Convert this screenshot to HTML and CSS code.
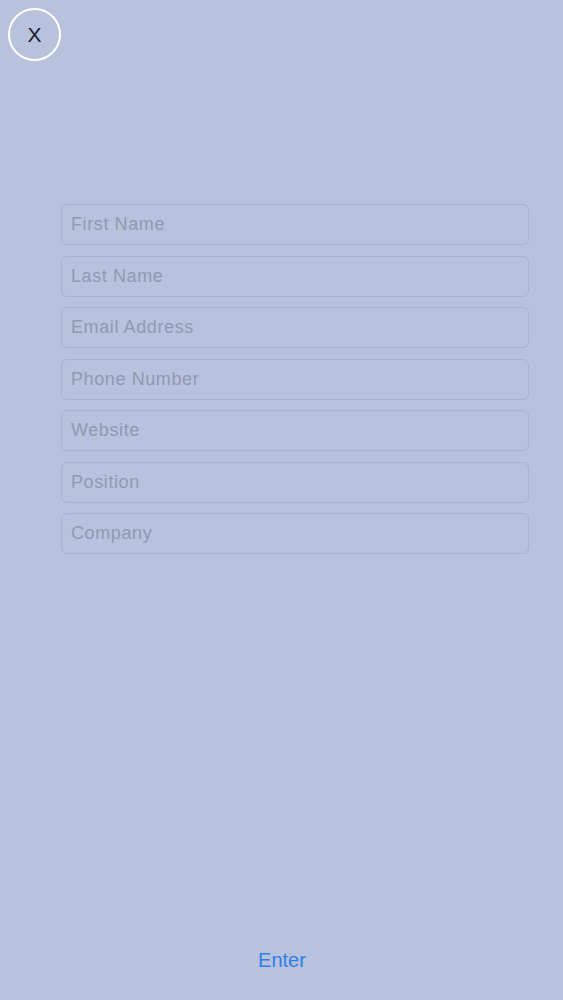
FILE: index.html
```html
<!DOCTYPE html>
<html>
<head>
<meta charset="utf-8">
<link rel="stylesheet" href="styles.css">
</head>
<body>
<div class="page">
  <div class="top">
    <button class="close">X</button>
  </div>
  <form class="form">
    <input class="field" placeholder="First Name">
    <input class="field" placeholder="Last Name">
    <input class="field" placeholder="Email Address">
    <input class="field" placeholder="Phone Number">
    <input class="field" placeholder="Website">
    <input class="field" placeholder="Position">
    <input class="field" placeholder="Company">
  </form>
  <div class="bottom">
    <button class="enter">Enter</button>
  </div>
</div>
</body>
</html>
```
FILE: styles.css
```css
html, body {
  margin: 0;
  padding: 0;
  background: #b8c2dc;
}
.page {
  height: 1000px;
  display: flex;
  flex-direction: column;
  font-family: "Liberation Sans", Arial, sans-serif;
}
.top {
  padding: 8px 0 0 8px;
  height: 52px;
}
.close {
  width: 53px;
  height: 53px;
  border-radius: 50%;
  border: 2px solid #ffffff;
  background: transparent;
  color: #1a2034;
  font-family: "Liberation Sans", Arial, sans-serif;
  font-size: 21px;
  padding: 0;
  display: flex;
  align-items: center;
  justify-content: center;
}
.form {
  margin: 144px 0 0 61px;
  width: 468px;
  display: flex;
  flex-direction: column;
  gap: 10.5px;
}
.field {
  box-sizing: border-box;
  height: 41px;
  width: 100%;
  border: 1px solid #a9b3cd;
  border-radius: 6px;
  background: #b8c2dc;
  padding: 0 9px;
  font-family: "Liberation Sans", Arial, sans-serif;
  font-size: 18px;
  letter-spacing: 0.6px;
  color: #4a5066;
  outline: none;
}
.field::placeholder {
  color: #9099b3;
}
.bottom {
  margin-top: auto;
  display: flex;
  justify-content: center;
  padding-bottom: 28px;
}
.enter {
  background: transparent;
  border: none;
  color: #2f7fe6;
  font-family: "Liberation Sans", Arial, sans-serif;
  font-size: 20px;
  padding: 0 0 0 1px;
}
```
